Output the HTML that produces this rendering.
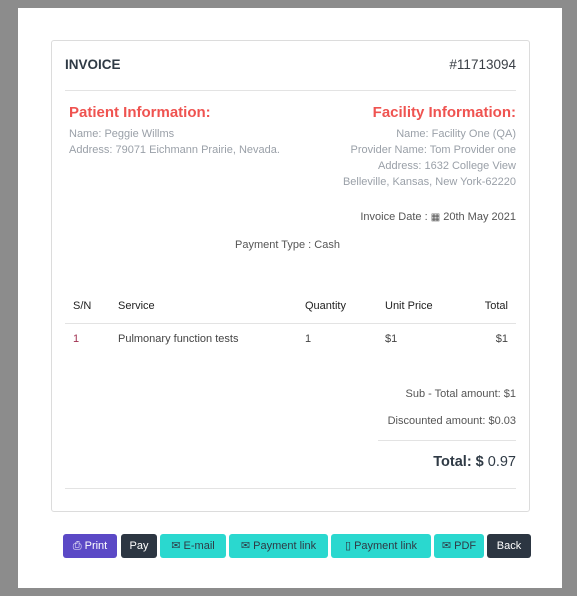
<!DOCTYPE html><html><head><style>
*{box-sizing:border-box;margin:0;padding:0}
body{width:577px;height:596px;background:#8c8c8c;font-family:"Liberation Sans",sans-serif;position:relative;overflow:hidden}
.page{position:absolute;left:18px;top:8px;width:544px;height:580px;background:#fff}
.card{position:absolute;left:51px;top:40px;width:479px;height:472px;border:1px solid #dcdcdc;border-radius:3px;background:#fff}
.a{position:absolute;white-space:nowrap}
.g{color:#9aa0a8;font-size:11px}
.r{right:13px;text-align:right}
.red{color:#ef5350;font-weight:bold;font-size:15px}
.line{position:absolute;left:13px;right:13px;height:1px;background:#e3e3e3}
.th{font-size:11px;color:#222}
.td{font-size:11px;color:#444}
.btn{position:absolute;top:534px;height:24px;border-radius:3px;font-size:11px;line-height:24px;text-align:center;color:#2f3a45}
.t{background:#2ad8cf}
.d{background:#2c3642;color:#fff}
</style></head><body>
<div class="page"></div>
<div class="card">
<div class="a" style="left:13px;top:16px;font-weight:bold;font-size:13.5px;color:#2f3a45">INVOICE</div>
<div class="a r" style="top:16px;font-size:13.5px;color:#3a3f46">#11713094</div>
<div class="line" style="top:49px"></div>
<div class="a red" style="left:17px;top:63px">Patient Information:</div>
<div class="a red r" style="top:63px">Facility Information:</div>
<div class="a g" style="left:17px;top:87px">Name: Peggie Willms</div>
<div class="a g" style="left:17px;top:103px">Address: 79071 Eichmann Prairie, Nevada.</div>
<div class="a g r" style="top:87px">Name: Facility One (QA)</div>
<div class="a g r" style="top:103px">Provider Name: Tom Provider one</div>
<div class="a g r" style="top:119px">Address: 1632 College View</div>
<div class="a g r" style="top:135px">Belleville, Kansas, New York-62220</div>
<div class="a r" style="top:170px;font-size:11px;color:#555">Invoice Date : <span style="font-size:10px">&#9638;</span> 20th May 2021</div>
<div class="a" style="left:183px;top:198px;font-size:11px;color:#555">Payment Type : Cash</div>
<div class="a th" style="left:21px;top:259px">S/N</div>
<div class="a th" style="left:66px;top:259px">Service</div>
<div class="a th" style="left:253px;top:259px">Quantity</div>
<div class="a th" style="left:333px;top:259px">Unit Price</div>
<div class="a th" style="right:21px;top:259px">Total</div>
<div class="line" style="top:282px"></div>
<div class="a td" style="left:21px;top:292px;color:#a03050">1</div>
<div class="a td" style="left:66px;top:292px">Pulmonary function tests</div>
<div class="a td" style="left:253px;top:292px">1</div>
<div class="a td" style="left:333px;top:292px">$1</div>
<div class="a td" style="right:21px;top:292px">$1</div>
<div class="a r" style="top:347px;font-size:11px;color:#555">Sub - Total amount: $1</div>
<div class="a r" style="top:374px;font-size:11px;color:#555">Discounted amount: $0.03</div>
<div class="line" style="top:399px;left:326px"></div>
<div class="a r" style="top:413px;font-size:14.5px;color:#2f3a45"><b>Total: $</b> 0.97</div>
<div class="line" style="top:447px"></div>
</div>
<div class="btn" style="left:63px;width:54px;background:#5b49c6;color:#fff">&#9113; Print</div>
<div class="btn d" style="left:121px;width:36px">Pay</div>
<div class="btn t" style="left:160px;width:66px">&#9993; E-mail</div>
<div class="btn t" style="left:229px;width:99px">&#9993; Payment link</div>
<div class="btn t" style="left:331px;width:100px">&#9647; Payment link</div>
<div class="btn t" style="left:434px;width:50px">&#9993; PDF</div>
<div class="btn d" style="left:487px;width:44px">Back</div>
</body></html>
